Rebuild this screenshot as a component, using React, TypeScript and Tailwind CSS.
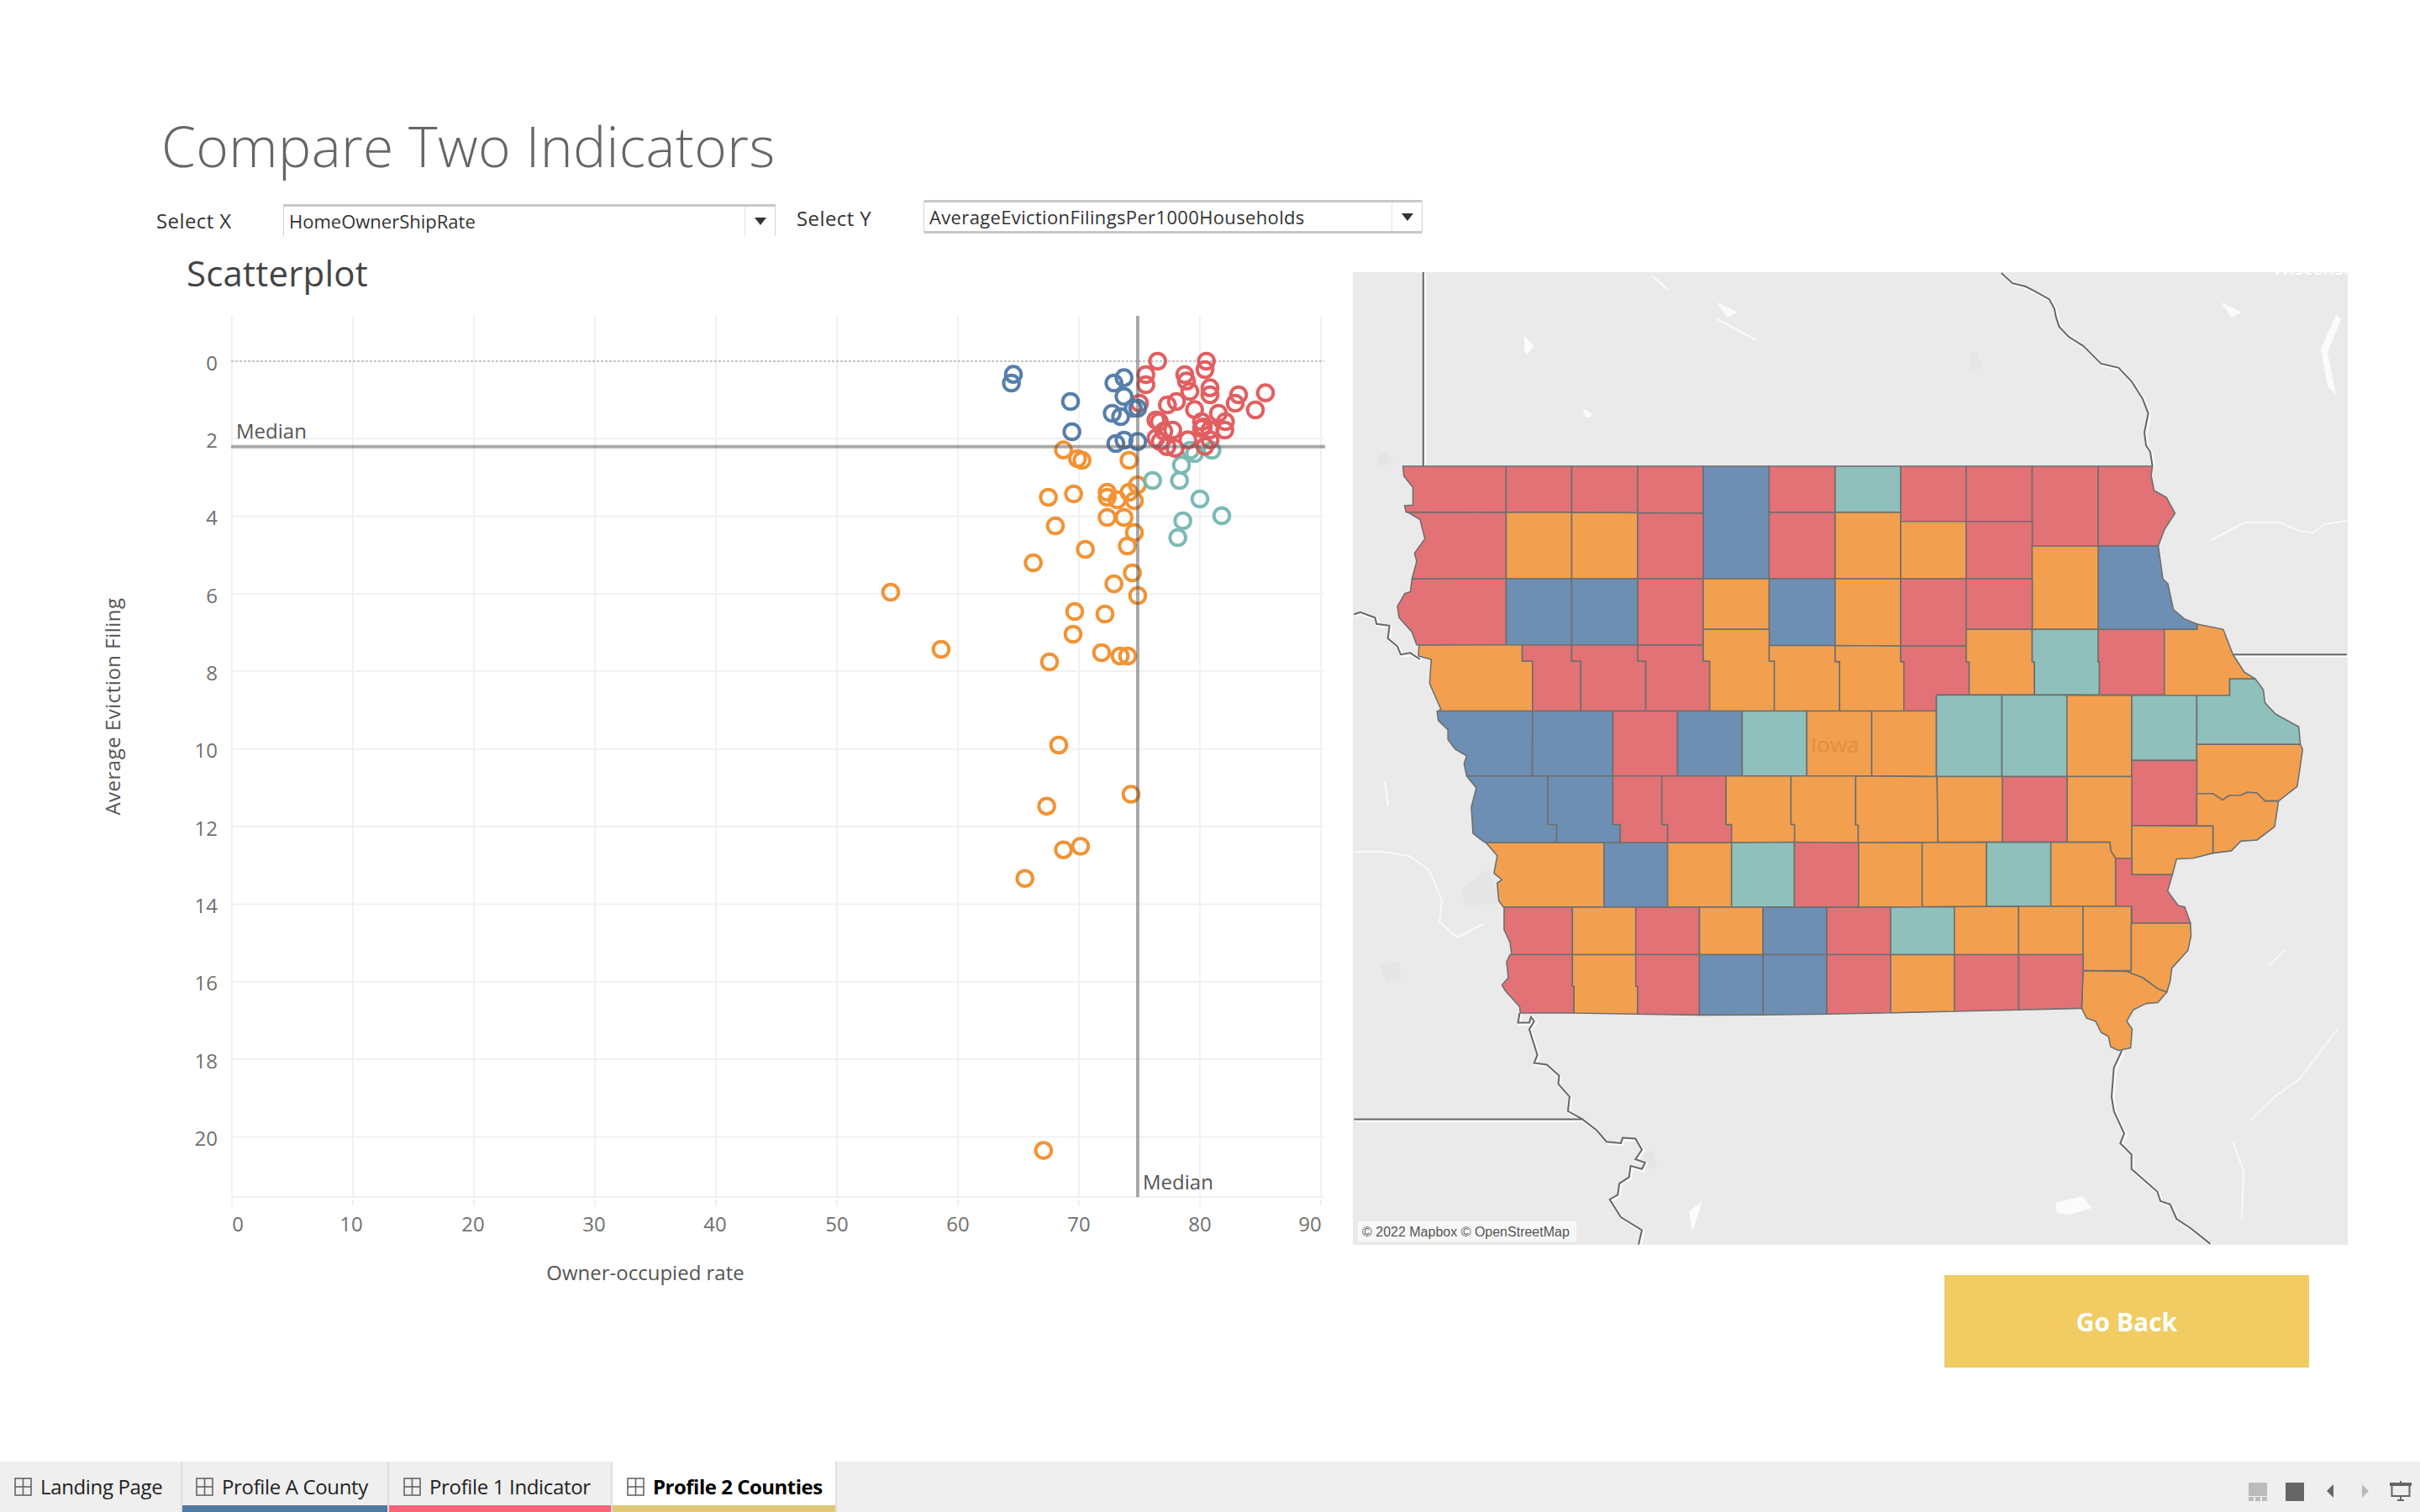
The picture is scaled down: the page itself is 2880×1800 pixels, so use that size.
const R = "#e27276", O = "#f2a04f", B = "#6d8fb3", T = "#8fc0bb";

const counties: [string, string][] = [
  [R, "1669.6,555 1792.5,555 1792.5,610 1673.5,609.7 1671.6,602 1681.5,601.3 1681.5,580.2 1670.8,566.8"],
  [R, "1792.5,555 1870.5,555 1870.5,610 1792.5,610"],
  [R, "1870.5,555 1949,555 1949,610.5 1870.5,610"],
  [R, "1949,555 2027,555 2027,611 1949,610.5"],
  [B, "2027,555 2105.5,555 2105.5,689 2027,689"],
  [R, "2105.5,555 2184,555 2184,610 2105.5,610"],
  [T, "2184,555 2262,555 2262,610 2184,610"],
  [R, "2262,555 2340,555 2340,620.8 2262,620.8"],
  [R, "2340,555 2418.5,555 2418.5,620.8 2340,620.8"],
  [R, "2418.5,555 2497,555 2497,650 2418.5,650"],
  [R, "2497,555 2561.6,555 2560,566 2563.5,584 2578,592 2588.4,611 2576,630 2568.5,650 2497,650"],
  [B, "2497,650 2568.5,650 2574,689 2580,695 2586.5,725.6 2600,737 2615,743 2615,749.3 2497,749.3"],
  [R, "1675.4,609.7 1792.5,610 1792.5,689 1680.4,689.3 1686,668.2 1683.4,658.7 1695.7,641.4 1690,618.5"],
  [O, "1792.5,610 1870.5,610 1870.5,689 1792.5,689"],
  [O, "1870.5,610 1949,610.5 1949,689 1870.5,689"],
  [R, "1949,610.5 2027,611 2027,689 1949,689"],
  [R, "2105.5,610 2184,610 2184,689 2105.5,689"],
  [O, "2184,610 2262,610 2262,689 2184,689"],
  [O, "2262,620.8 2340,620.8 2340,689 2262,689"],
  [R, "2340,620.8 2418.5,620.8 2418.5,689 2340,689"],
  [O, "2418.5,650 2497,650 2497,749.3 2418.5,749.3"],
  [R, "1680.4,689.3 1792.5,689 1792.5,767.7 1686,767.7 1680.4,752.4 1665,735.2 1663,721.8 1672,706.5 1678.4,704.6"],
  [B, "1792.5,689 1870.5,689 1870.5,767.7 1792.5,767.7"],
  [B, "1870.5,689 1949,689 1949,767.7 1870.5,767.7"],
  [R, "1949,689 2027,689 2027,768 1949,767.7"],
  [O, "2027,689 2105.5,689 2105.5,749.3 2027,749.3"],
  [B, "2105.5,689 2184,689 2184,768.5 2105.5,768.5"],
  [O, "2184,689 2262,689 2262,769 2184,768.5"],
  [R, "2262,689 2340,689 2340,749.3 2340,769 2262,769"],
  [R, "2340,689 2418.5,689 2418.5,749.3 2340,749.3"],
  [O, "1688.8,768 1811.6,767.7 1811.6,787 1823.9,787 1823.9,846.5 1712,846.5 1714.8,844.2 1701.4,813.6 1703.3,785 1688,781"],
  [R, "1811.6,767.7 1870.5,767.7 1870.5,787 1881.3,787 1881.3,846.5 1823.9,846.5 1823.9,787 1811.6,787"],
  [R, "1870.5,767.7 1949,767.7 1949,787 1958.6,787 1958.6,846.5 1881.3,846.5 1881.3,787 1870.5,787"],
  [R, "1949,767.7 2027,768 2027,787 2034.7,787 2034.7,846.5 1958.6,846.5 1958.6,787 1949,787"],
  [O, "2027,749.3 2105.5,749.3 2105.5,787 2111.6,787 2111.6,846.5 2034.7,846.5 2034.7,787 2027,787"],
  [O, "2105.5,768.5 2184,768.5 2184,787.6 2189.3,787.6 2189.3,846.5 2111.6,846.5 2111.6,787 2105.5,787"],
  [O, "2184,768.5 2262,769 2262,787.6 2265.8,788 2265.8,846.5 2189.3,846.5 2189.3,787.6 2184,787.6"],
  [R, "2262,769 2340,769 2340,788 2343.5,788 2343.5,827.4 2304.5,827.4 2304.5,846.5 2265.8,846.5 2265.8,788 2262,787.6"],
  [O, "2340,749.3 2418.5,749.3 2418.5,788 2421.2,788 2421.2,827.4 2343.5,827.4 2343.5,788 2340,788"],
  [T, "2418.5,749.3 2497,749.3 2497,788 2498.5,788 2498.5,827.4 2421.2,827.4 2421.2,788 2418.5,788"],
  [R, "2497,749.3 2575.8,749.3 2575.8,827.4 2498.5,827.4 2498.5,788 2497,788"],
  [O, "2575.8,749.3 2615,749.3 2615,743 2645.8,749.3 2657.3,779 2670.7,800 2684,808.3 2653.5,808.3 2653.5,827.8 2575.8,827.8"],
  [B, "1710.2,846.5 1823.9,846.5 1823.5,923.7 1745.4,923.7 1742.4,909.3 1745.4,899.7 1732,892 1723.2,880.6 1723.2,869 1711.7,857.6"],
  [B, "1823.9,846.5 1919.5,846.5 1919.5,923.7 1823.5,923.7"],
  [R, "1919.5,846.5 1996.4,846.5 1996.4,923.7 1919.5,923.7"],
  [B, "1996.4,846.5 2073.4,846.5 2073.4,923.7 1996.4,923.7"],
  [T, "2073.4,846.5 2150.3,846.5 2150.3,923.7 2073.4,923.7"],
  [O, "2150.3,846.5 2227.5,846.5 2227.5,923.7 2150.3,923.7"],
  [O, "2227.5,846.5 2304.5,846.5 2304.5,924.5 2227.5,923.7"],
  [T, "2304.5,827.4 2382.5,827.4 2382.5,924.5 2304.5,924.5"],
  [T, "2382.5,827.4 2459.8,827.4 2459.8,924.5 2382.5,924.5"],
  [O, "2459.8,827.4 2537,827.8 2537,924.5 2459.8,924.5"],
  [T, "2537,827.8 2614.4,827.8 2614.4,905.4 2537,905.4"],
  [T, "2614.4,827.8 2653.5,827.8 2653.5,808.3 2684,808.3 2693.6,821.3 2695.5,836.6 2708,850 2735.7,865.3 2737.6,886.3 2614.4,886.3"],
  [O, "2614.4,886.3 2737.6,886.3 2740.3,892 2737.6,911.5 2733.8,936.4 2711.6,953.6 2695.5,953.6 2686,944 2674.5,943.2 2666.8,946.7 2653.5,946.7 2645,952.4 2633.6,944.8 2614.4,944.8"],
  [R, "2537,905.4 2614.4,905.4 2614.4,982.7 2537,982.7"],
  [O, "2614.4,944.8 2633.6,944.8 2645,952.4 2653.5,946.7 2666.8,946.7 2674.5,943.2 2686,944 2695.5,953.6 2711.6,953.6 2707,984.2 2686,1000 2666.8,1001.4 2655.4,1012.9 2633.6,1015.6 2633.6,983.4 2614.4,983.4"],
  [O, "2537,983 2633.6,983.4 2633.6,1015.6 2609.5,1021.7 2590.3,1022.5 2585.3,1041.2 2537,1041.2"],
  [B, "1745.4,923.7 1842.2,923.7 1842.2,981.5 1852.6,981.5 1852.6,1003.3 1768.4,1003.3 1764.5,1001 1753,992 1751,961 1756.9,938"],
  [B, "1842.2,923.7 1919.5,923.7 1919.5,981.5 1928.3,981.5 1928.3,1003.3 1852.6,1003.3 1852.6,981.5 1842.2,981.5"],
  [R, "1919.5,923.7 1977.7,923.7 1977.7,981.5 1984.6,981.5 1984.6,1003.3 1928.3,1003.3 1928.3,981.5 1919.5,981.5"],
  [R, "1977.7,923.7 2054.2,923.7 2054.2,981.5 2060.7,981.5 2060.7,1003.3 1984.6,1003.3 1984.6,981.5 1977.7,981.5"],
  [O, "2054.2,923.7 2131.5,923.7 2131.5,981.5 2135.7,981.5 2135.7,1003.3 2060.7,1003.3 2060.7,981.5 2054.2,981.5"],
  [O, "2131.5,923.7 2208.4,923.7 2208.4,982.3 2211.5,982.3 2211.5,1003.3 2135.7,1003.3 2135.7,981.5 2131.5,981.5"],
  [O, "2208.4,923.7 2305.2,924.5 2306.4,982.3 2306.4,1002.6 2211.5,1003.3 2211.5,982.3 2208.4,982.3"],
  [O, "2305.2,924.5 2382.9,924.5 2382.9,1002.6 2306.4,1002.6"],
  [R, "2382.9,924.5 2460.2,924.5 2460.2,1002.6 2382.9,1002.6"],
  [O, "2460.2,924.5 2537,924.5 2537,1021.7 2517.6,1021.7 2511.9,1012.9 2511,1002.6 2460.2,1002.6"],
  [R, "2517.6,1021.7 2537,1021.7 2537,1041.2 2585.3,1041.2 2579.6,1060.7 2592.2,1078 2600,1079.8 2606.8,1099 2537,1099 2537,1079 2517.6,1079"],
  [O, "1768.4,1003.3 1908.8,1003.3 1908.8,1079.9 1789.4,1079.9 1783.7,1072.2 1781.8,1051 1787.5,1047.3 1778,1039.7 1781.8,1018.6"],
  [B, "1908.8,1003.3 1984.6,1003.3 1984.6,1079.9 1908.8,1079.9"],
  [O, "1984.6,1003.3 2060.7,1003.3 2060.7,1079.9 1984.6,1079.9"],
  [T, "2060.7,1003.3 2135.5,1002.5 2135.5,1079.9 2060.7,1079.9"],
  [R, "2135.5,1002.5 2211.9,1003.3 2211.9,1079.9 2135.5,1079.9"],
  [O, "2211.9,1003.3 2287.6,1003 2287.6,1079.5 2211.9,1079.9"],
  [O, "2287.6,1003 2364.2,1002.6 2364.2,1079 2287.6,1079.5"],
  [T, "2364.2,1002.6 2440.7,1002.6 2440.7,1079 2364.2,1079"],
  [O, "2440.7,1002.6 2511,1002.6 2511.9,1012.9 2517.6,1021.7 2517.6,1079 2440.7,1079"],
  [R, "1790,1079.9 1871.3,1079.9 1871.3,1136.5 1799,1136.5 1797,1122 1790,1106.6"],
  [O, "1871.3,1079.9 1946.7,1079.9 1946.7,1136.5 1871.3,1136.5"],
  [R, "1946.7,1079.9 2022.5,1079.9 2022.5,1136.5 1946.7,1136.5"],
  [O, "2022.5,1079.9 2098.2,1079.9 2098.2,1136.5 2022.5,1136.5"],
  [B, "2098.2,1079.9 2174,1079.9 2174,1136.5 2098.2,1136.5"],
  [R, "2174,1079.9 2250,1079.9 2250,1136.5 2174,1136.5"],
  [T, "2250,1079.9 2325.9,1079.5 2325.9,1136.5 2250,1136.5"],
  [O, "2325.9,1079.5 2402.4,1079 2402.4,1136.5 2325.9,1136.5"],
  [O, "2402.4,1079 2479,1079 2479,1136.5 2402.4,1136.5"],
  [O, "2479,1079 2536.4,1079 2536.4,1155.6 2479,1155.6"],
  [O, "2536.4,1099 2606.8,1099 2607.5,1114 2603.7,1131.5 2584.6,1152.6 2582.7,1167.9 2578.8,1181 2568.5,1177.4 2550,1164 2531,1156.4 2536.4,1155.6"],
  [O, "2479,1155.6 2531,1156.4 2550,1164 2568.5,1177.4 2578.8,1181 2568,1193.5 2554,1194.6 2538.6,1202.3 2531,1215.7 2537.5,1225.3 2535.6,1247.5 2521.4,1250.5 2511.9,1246.3 2509.2,1233.7 2500.4,1229 2493.9,1215.7 2483.2,1211.9 2477.4,1200.4"],
  [R, "1797,1136.5 1871.3,1136.5 1871.3,1174 1873.2,1174 1873.2,1206 1809.3,1206 1808.5,1198.5 1791.3,1179.3 1787.5,1172.5 1795,1164 1793,1145"],
  [O, "1871.3,1136.5 1946.7,1136.5 1946.7,1174 1949,1174 1949,1207.3 1873.2,1206 1873.2,1174 1871.3,1174"],
  [R, "1946.7,1136.5 2022.5,1136.5 2022.5,1208.4 1949,1207.3 1949,1174 1946.7,1174"],
  [B, "2022.5,1136.5 2098.2,1136.5 2098.2,1208.2 2022.5,1208.4"],
  [B, "2098.2,1136.5 2174,1136.5 2174,1207.2 2098.2,1208.2"],
  [R, "2174,1136.5 2250,1136.5 2250,1205.7 2174,1207.2"],
  [O, "2250,1136.5 2326,1136.5 2326,1204 2250,1205.7"],
  [R, "2326,1136.5 2402.4,1136.5 2402.4,1202.3 2326,1204"],
  [R, "2402.4,1136.5 2479,1136.5 2479,1155.6 2477.4,1200.4 2402.4,1202.3"],
];

const rivers = [
  "1693.8,324 1693.8,555",
  "2381.8,325 2395,337.2 2410.5,341 2422,346.8 2439,356.4 2445,367.8 2446.8,377.4 2450.6,388.9 2462,401 2479.3,411.8 2500.4,432.9 2521.4,437.9 2536.7,454 2550,475 2556.6,492.2 2552,515 2554,530.5 2559,538 2561.6,555",
  "2658,779.2 2793,779.2",
  "1611.5,731.3 1619,728.7 1636.4,735.2 1638.3,742.8 1653.6,744.8 1651.7,760 1663,769.6 1667,779.2 1678.4,777.3 1690,785",
  "1808.5,1206 1806.6,1217.6 1820,1217.6 1822,1210.7 1825.8,1215.7 1820,1225.3 1829.6,1255.9 1825.8,1265.4 1841,1267.4 1855.6,1280.7 1854.5,1290.3 1867.9,1305.6 1866,1322.8 1883.2,1332.4 1900.4,1345.8 1911.9,1359.2 1929,1361 1931,1354.6 1946.3,1355.4 1954,1368.8 1946.3,1380.2 1957.8,1384 1954,1391.7 1940.6,1387.9 1938.7,1401.3 1927.2,1408.9 1925.3,1422.3 1915.7,1428 1929,1449 1954,1464.4 1950,1481.6",
  "1611.5,1332.4 1883.2,1332.4",
  "2525.3,1250.5 2515.7,1271.2 2513,1305.6 2515.7,1322.8 2528,1349.6 2523.3,1361 2536.7,1374.5 2536.7,1391.7 2567.3,1418.5 2571.2,1430 2582.7,1433.8 2590.3,1451 2607.5,1462.5 2630.5,1480.9",
];

const water = [
  "2632,643 2671,622 2713,622 2736,632 2753,634 2766,624 2793,620",
  "2678,1334 2709,1304 2736,1285 2782,1225",
  "1612,1014 1645,1014 1677,1019 1701,1036 1716,1072 1713,1097 1734,1116 1765,1100",
  "2658,1360 2670,1395 2668,1450",
  "1966,328 1985,345",
  "2044,380 2090,405",
  "1648,930 1652,960",
  "2700,1150 2720,1130",
];

const lakes = [
  "2644,360 2668,372 2656,378 2646,364",
  "2044,360 2068,372 2056,378 2046,364",
  "1814,400 1826,412 1817,422 1814,418",
  "1884,486 1895,493 1892,497 1886,496",
  "2780,375 2786,380 2770,420 2780,470 2770,460 2762,415",
  "2446,1432 2478,1424 2490,1438 2462,1446 2448,1444",
  "2010,1442 2026,1430 2014,1466",
];

const blotches = [
  "1738,1060 1770,1035 1790,1075 1745,1078",
  "1642,1150 1665,1145 1668,1165 1650,1170",
  "1638,545 1650,537 1658,550 1640,556",
  "1955,1372 1968,1370 1972,1390 1958,1392",
  "2344,420 2352,420 2360,437 2346,442",
];

const blue = [[258,197],[251,228],[462,294],[467,402],[617,228],[653,209],[653,276],[611,336],[641,348],[686,318],[702,318],[624,444],[653,432],[702,437]];
const red = [[773,150],[947,150],[942,180],[731,198],[731,234],[870,198],[876,221],[888,258],[960,245],[960,270],[1062,270],[1050,300],[1158,263],[1122,324],[708,300],[840,294],[808,306],[905,323],[990,336],[1015,366],[1013,396],[930,366],[936,385],[930,390],[960,395],[767,360],[779,366],[827,396],[881,431],[960,431],[942,454],[767,425],[782,437],[806,455],[835,461],[795,400]];
const teal = [[905,480],[890,468],[967,468],[858,521],[851,576],[755,576],[924,642],[1002,702],[863,720],[845,780]];
const orange = [[437,467],[487,498],[503,504],[671,504],[701,592],[671,618],[593,618],[593,636],[629,645],[690,648],[383,636],[473,624],[593,708],[653,708],[408,738],[690,762],[665,810],[515,822],[329,870],[683,906],[617,945]];
const orangeFull = [[1354,709],[1060,705],[1120,773],[1279,728],[1315,731],[1277,755],[1249,788],[1311,777],[1333,781],[1342,781],[1260,887],[1346,945.5],[1245.7,959.7],[1265.6,1011.7],[1285.9,1007.5],[1219.7,1045.8],[1241.9,1369.6]];

const z = (p: number[]) => [1120 + p[0] / 3, 380 + p[1] / 3];
const xTicks: [string, number][] = [["0",283],["10",418],["20",563],["30",707],["40",851],["50",996],["60",1140],["70",1284],["80",1428],["90",1559]];
const yTicks = [0,2,4,6,8,10,12,14,16,18,20];
const yOf = (v: number) => 430 + 46.17 * v;

function Dots({ pts, color }: { pts: number[][]; color: string }) {
  return <g fill="none" stroke={color} strokeWidth={4} opacity={0.95}>{pts.map((p, i) => <circle key={i} cx={p[0]} cy={p[1]} r={9.3} />)}</g>;
}

function Chart() {
  return (
    <svg width={1610} height={1166} viewBox="0 374 1610 1166" className="block" fontFamily="'Open Sans', sans-serif">
      {[0,1,2,3,4,5,6,7,8,9].map(k => (
        <g key={k}>
          <line x1={276 + 144 * k} x2={276 + 144 * k} y1={376} y2={1425} stroke="#f1f1f1" strokeWidth={2} />
          <line x1={276 + 144 * k} x2={276 + 144 * k} y1={1428} y2={1436} stroke="#f1f1f1" strokeWidth={2} />
        </g>
      ))}
      {yTicks.slice(1).map(v => <line key={v} x1={275} x2={1576} y1={yOf(v)} y2={yOf(v)} stroke="#f1f1f1" strokeWidth={2} />)}
      <line x1={275} x2={1576} y1={1425} y2={1425} stroke="#f1f1f1" strokeWidth={2} />
      <line x1={275} x2={1576} y1={430} y2={430} stroke="#c4c4c4" strokeWidth={2} strokeDasharray="3 2" />
      <Dots pts={orange.map(z)} color="#f28e2b" />
      <Dots pts={orangeFull} color="#f28e2b" />
      <Dots pts={teal.map(z)} color="#76b7b2" />
      <Dots pts={red.map(z)} color="#e15759" />
      <Dots pts={blue.map(z)} color="#4e79a7" />
      <line x1={275} x2={1577} y1={531.7} y2={531.7} stroke="#555" strokeOpacity={0.5} strokeWidth={4} />
      <line x1={1354} x2={1354} y1={376} y2={1425} stroke="#555" strokeOpacity={0.5} strokeWidth={4} />
      <g fill="#707070" fontSize={24}>
        {xTicks.map(([t, x]) => <text key={t} x={x} y={1466} textAnchor="middle">{t}</text>)}
        {yTicks.map(v => <text key={v} x={259} y={yOf(v) + 10.5} textAnchor="end">{v}</text>)}
      </g>
      <g fill="#555" fontSize={24}>
        <text x={281} y={522}>Median</text>
        <text x={1360} y={1416}>Median</text>
        <text x={768} y={1524} textAnchor="middle">Owner-occupied rate</text>
        <text transform="translate(143 841) rotate(-90)" textAnchor="middle" letterSpacing={0.5}>Average Eviction Filing</text>
      </g>
    </svg>
  );
}

function IowaMap() {
  return (
    <svg width={1184} height={1158} viewBox="1610 324 1184 1158" className="block bg-[#eaeaea]">
      {blotches.map((p, i) => <polygon key={i} points={p} fill="#e5e5e5" />)}
      {lakes.map((p, i) => <polygon key={i} points={p} fill="#fbfbfb" />)}
      {water.map((p, i) => <polyline key={i} points={p} fill="none" stroke="#f9f9f9" strokeWidth={2} />)}
      <text x={2705} y={327} fontFamily="'Open Sans', sans-serif" fontSize={22} fill="#ffffff">Wisconsin</text>
      <g transform="translate(1.5 1.5)">
        {rivers.map((p, i) => <polyline key={i} points={p} fill="none" stroke="#fafafa" strokeWidth={4} />)}
      </g>
      {rivers.map((p, i) => <polyline key={i} points={p} fill="none" stroke="#666666" strokeWidth={2} />)}
      <g stroke="#6f6f6f" strokeWidth={1.6} strokeLinejoin="round">
        {counties.map(([c, p], i) => <polygon key={i} points={p} fill={c} />)}
      </g>
      <text x={2155} y={896} fontFamily="'Open Sans', sans-serif" fontSize={26} fill="#e38e40">Iowa</text>
      <rect x={1616} y={1454} width={260} height={24} fill="#f8f8f8" />
      <text x={1621} y={1472} fontFamily="'Liberation Sans', sans-serif" fontSize={16} fill="#555">© 2022 Mapbox © OpenStreetMap</text>
    </svg>
  );
}

function GridIcon() {
  return (
    <svg width={21} height={22} viewBox="0 0 21 22" className="shrink-0" fill="none" stroke="#666" strokeWidth={1.6}>
      <rect x={1} y={1} width={19} height={20} />
      <line x1={10.5} y1={1} x2={10.5} y2={21} />
      <line x1={1} y1={11} x2={20} y2={11} />
    </svg>
  );
}

function Tab({ label, width, pad, strip, active }: { label: string; width: string; pad: string; strip: string; active?: boolean }) {
  return (
    <div className={`${width} h-[60px] relative flex items-start pt-[19px] gap-[10px] border-r-2 border-[#dfdfdf] ${pad} ${active ? "bg-white" : ""}`}>
      <GridIcon />
      <span className={`text-[24px] leading-[22px] whitespace-nowrap ${active ? "font-bold text-black tracking-[-0.5px]" : "text-[#222] tracking-[-0.35px]"}`}>{label}</span>
      {strip !== "" && <div className={`absolute left-0 right-0 bottom-0 h-[8px] ${strip}`} />}
    </div>
  );
}

function Dropdown({ label, width, clipped, text }: { label: string; width: string; clipped?: boolean; text: string }) {
  return (
    <div className={`${width} flex border border-[#d4d4d4] border-t-[3px] border-t-[#c8c8c8] bg-white ${clipped ? "h-[38px] border-b-0" : "h-[40px] border-b-[3px] border-b-[#c8c8c8] rounded-[2px]"}`}>
      <div className={`flex-1 pl-[6px] text-[22px] leading-[34px] text-[#333] whitespace-nowrap overflow-hidden ${text}`}>{label}</div>
      <div className="w-[36px] border-l border-[#e2e2e2] flex items-center justify-center">
        <div className="w-0 h-0 border-l-[7px] border-r-[7px] border-t-[9px] border-l-transparent border-r-transparent border-t-[#333]" />
      </div>
    </div>
  );
}

export default function App() {
  return (
    <div className="w-[2880px] h-[1800px] bg-white flex flex-col overflow-hidden font-['Open_Sans',sans-serif]">
      <h1 className="pt-[130px] pl-[192px] h-[238px] text-[66px] leading-[86px] font-light text-[#666] tracking-[0.35px]">Compare Two Indicators</h1>
      <div className="h-[62px] flex items-start pl-[186px]">
        <div className="w-[151px] pt-[8px] text-[24px] leading-[34px] font-medium text-[#333] tracking-[0.4px]">Select X</div>
        <div className="pt-[5px]"><Dropdown label="HomeOwnerShipRate" width="w-[586px]" clipped text="" /></div>
        <div className="w-[176px] pl-[25px] pt-[5px] text-[24px] leading-[34px] font-medium text-[#333] tracking-[0.4px]">Select Y</div>
        <Dropdown label="AverageEvictionFilingsPer1000Households" width="w-[594px]" text="tracking-[0.35px]" />
      </div>
      <div className="flex">
        <div className="w-[1610px]">
          <div className="h-[74px] pl-[222px] text-[42px] leading-[50px] text-[#444] tracking-[0.2px]">Scatterplot</div>
          <Chart />
        </div>
        <div className="w-[1184px] pt-[24px]">
          <IowaMap />
          <div className="mt-[36px] ml-[704px] w-[434px] h-[110px] bg-[#f0cc62] flex items-center justify-center text-white font-bold text-[30px]">Go Back</div>
        </div>
      </div>
      <div className="mt-auto h-[60px] bg-[#efefef] flex items-start">
        <Tab label="Landing Page" width="w-[217px]" pad="pl-[17px]" strip="" />
        <Tab label="Profile A County" width="w-[246px]" pad="pl-[16px]" strip="bg-[#4e79a0]" />
        <Tab label="Profile 1 Indicator" width="w-[266px]" pad="pl-[17px]" strip="bg-[#f96477]" />
        <Tab label="Profile 2 Counties" width="w-[267px]" pad="pl-[17px]" strip="bg-[#dfc776]" active />
        <div className="flex-1 h-full flex justify-end items-start pt-[23px] pr-[9px]">
          <svg width={200} height={26} viewBox="2672 1763 200 26">
            <rect x={2677} y={1765} width={22} height={16} fill="#bbb" />
            <rect x={2677} y={1782} width={6} height={5} fill="#bbb" />
            <rect x={2685} y={1782} width={6} height={5} fill="#bbb" />
            <rect x={2693} y={1782} width={6} height={5} fill="#bbb" />
            <rect x={2721} y={1765} width={22} height={22} rx={1} fill="#666" />
            <polygon points="2778,1767 2770,1775 2778,1783" fill="#666" />
            <polygon points="2812,1767 2820,1775 2812,1783" fill="#bbb" />
            <rect x={2845} y={1765} width={26} height={4} fill="#666" />
            <rect x={2857} y={1763} width={2} height={3} fill="#666" />
            <rect x={2847.5} y={1768} width={21} height={13} fill="none" stroke="#666" strokeWidth={2} />
            <rect x={2857} y={1781} width={2} height={5} fill="#666" />
            <rect x={2854} y={1785} width={8} height={2} fill="#666" />
          </svg>
        </div>
      </div>
    </div>
  );
}
